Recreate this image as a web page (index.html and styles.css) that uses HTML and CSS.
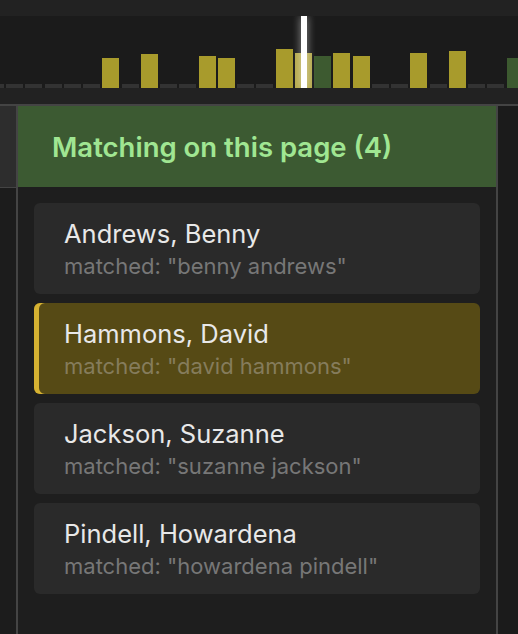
FILE: index.html
```html
<!DOCTYPE html>
<html lang="en">
<head>
  <meta charset="UTF-8">
  <meta name="viewport" content="width=device-width, initial-scale=1.0">
  <title>Matching on this page</title>
  <link rel="stylesheet" href="styles.css">
</head>
<body>
  <div class="timeline">
    <div class="track">
      <div class="bars">
        <div class="bar"></div>
        <div class="bar"></div>
        <div class="bar"></div>
        <div class="bar"></div>
        <div class="bar"></div>
        <div class="bar"></div>
        <div class="bar hit" style="height: 30px"></div>
        <div class="bar"></div>
        <div class="bar hit" style="height: 34px"></div>
        <div class="bar"></div>
        <div class="bar"></div>
        <div class="bar hit" style="height: 32px"></div>
        <div class="bar hit" style="height: 30px"></div>
        <div class="bar"></div>
        <div class="bar"></div>
        <div class="bar hit" style="height: 39px"></div>
        <div class="bar hit current" style="height: 35px"></div>
        <div class="bar page" style="height: 32px"></div>
        <div class="bar hit" style="height: 35px"></div>
        <div class="bar hit" style="height: 32px"></div>
        <div class="bar"></div>
        <div class="bar"></div>
        <div class="bar hit" style="height: 35px"></div>
        <div class="bar"></div>
        <div class="bar hit" style="height: 37px"></div>
        <div class="bar"></div>
        <div class="bar"></div>
        <div class="bar page" style="height: 30px"></div>
      </div>
      <div class="marker"></div>
    </div>
  </div>

  <div class="main">
    <div class="side">
      <div class="side-top"></div>
    </div>

    <div class="panel">
      <div class="panel-header">Matching on this page (4)</div>
      <div class="match-list">
        <div class="match">
          <div class="match-name">Andrews, Benny</div>
          <div class="match-term">matched: "benny andrews"</div>
        </div>
        <div class="match active">
          <div class="match-name">Hammons, David</div>
          <div class="match-term">matched: "david hammons"</div>
        </div>
        <div class="match">
          <div class="match-name">Jackson, Suzanne</div>
          <div class="match-term">matched: "suzanne jackson"</div>
        </div>
        <div class="match">
          <div class="match-name">Pindell, Howardena</div>
          <div class="match-term">matched: "howardena pindell"</div>
        </div>
      </div>
    </div>

    <div class="gutter"></div>
  </div>
</body>
</html>
```

FILE: styles.css
```css
html, body {
  height: 100%;
}
body {
  margin: 0;
  background-color: #1c1c1c;
  font-family: Inter, "Noto Sans", sans-serif;
  display: flex;
  flex-direction: column;
  overflow: hidden;
}
.timeline {
  background-color: #222222;
  padding: 16px 0;
  border-bottom: 2px solid #444444;
}
.track {
  position: relative;
  height: 72px;
  background-color: #1b1b1b;
  overflow: hidden;
}
.bars {
  display: flex;
  align-items: flex-end;
  gap: 2.25px;
  height: 100%;
  margin-left: -13.25px;
}
.bar {
  flex: 0 0 17px;
  height: 4px;
  background-color: #333333;
}
.bar.hit {
  background-color: #a89b2c;
}
.bar.current {
  background-color: #b4a84a;
}
.bar.page {
  background-color: #3d5a30;
}
.marker {
  position: absolute;
  left: 301px;
  top: 0;
  width: 6px;
  height: 72px;
  background-color: #ffffff;
  box-shadow: 0 0 8px rgba(255, 255, 255, 0.55);
}
.main {
  flex: 1;
  display: flex;
  min-height: 0;
}
.side {
  width: 16px;
  background-color: #1c1c1c;
}
.side-top {
  height: 81px;
  background-color: #2d2d2d;
  border-bottom: 1px solid #444444;
}
.panel {
  flex: 1;
  background-color: #1e1e1e;
  border-left: 2px solid #444444;
  border-right: 2px solid #444444;
}
.panel-header {
  height: 81px;
  display: flex;
  align-items: center;
  padding-left: 34px;
  background-color: #3c5a32;
  color: #a0e692;
  font-size: 27.5px;
  font-weight: 600;
}
.match-list {
  display: flex;
  flex-direction: column;
  gap: 9px;
  padding: 16px;
}
.match {
  height: 91px;
  box-sizing: border-box;
  padding: 15px 30px 12px;
  background-color: #2a2a2a;
  border-radius: 6px;
}
.match.active {
  background-color: #564a15;
  box-shadow: inset 5px 0 0 #d6b232;
}
.match-name {
  font-size: 25.5px;
  line-height: 32px;
  color: #e8e8e8;
}
.match-term {
  font-size: 22px;
  line-height: 32px;
  color: #777777;
}
.match.active .match-term {
  color: #857c5c;
}
.gutter {
  width: 20px;
  background-color: #1b1b1b;
}
```
